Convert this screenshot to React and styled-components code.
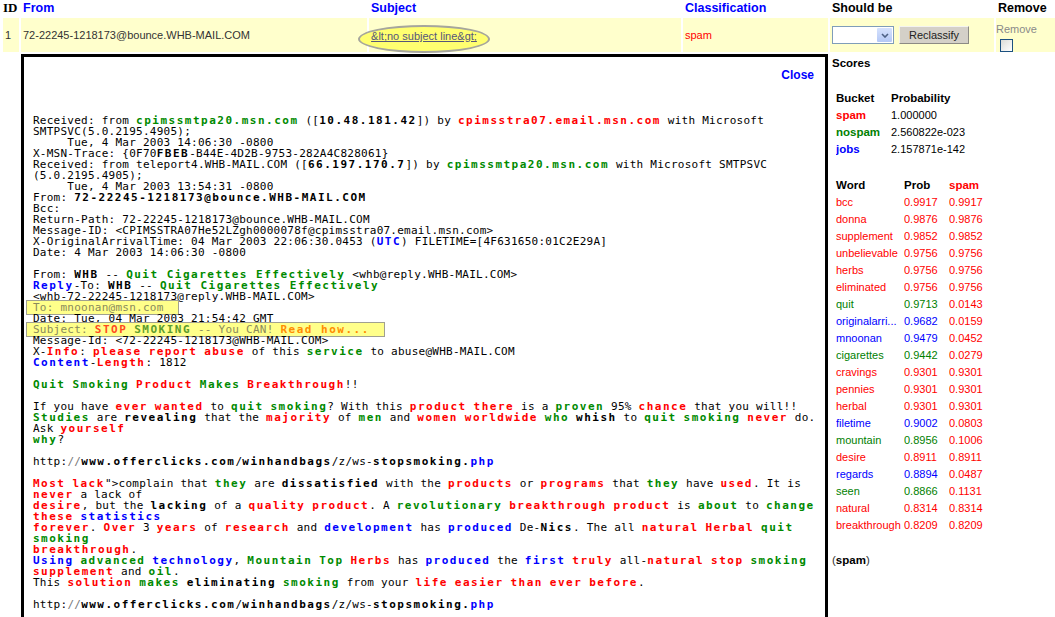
import React from "react";
import styled, { createGlobalStyle } from "styled-components";

const UI = `"Liberation Sans", Arial, sans-serif`;
const MONO = `"DejaVu Sans Mono", "Liberation Mono", monospace`;

const GlobalStyle = createGlobalStyle`
  body {
    margin: 0;
    background: #fff;
    color: #000;
    font-family: ${UI};
    font-size: 11px;
  }
`;

const tones = {
  n: { color: "#000", bold: false },
  b: { color: "#000", bold: true },
  r: { color: "#ff0000", bold: true },
  g: { color: "#008a00", bold: true },
  u: { color: "#0000ff", bold: true },
  m: { color: "#777", bold: false },
  s: { color: "#ff4a1c", bold: true },
  k: { color: "#5c9c2c", bold: true },
  o: { color: "#ff8c00", bold: true },
};

const MAIL = [
  "Received: from «g:cpimssmtpa20.msn.com» ([«b:10.48.181.42»]) by «r:cpimsstra07.email.msn.com» with Microsoft",
  "SMTPSVC(5.0.2195.4905);",
  "     Tue, 4 Mar 2003 14:06:30 -0800",
  "X-MSN-Trace: {0F70«b:FBEB»-B44E-4D2B-9753-282A4C828061}",
  "Received: from teleport4.WHB-MAIL.COM ([«b:66.197.170.7»]) by «g:cpimssmtpa20.msn.com» with Microsoft SMTPSVC",
  "(5.0.2195.4905);",
  "     Tue, 4 Mar 2003 13:54:31 -0800",
  "From: «b:72-22245-1218173@bounce.WHB-MAIL.COM»",
  "Bcc:",
  "Return-Path: 72-22245-1218173@bounce.WHB-MAIL.COM",
  "Message-ID: <CPIMSSTRA07He52LZgh0000078f@cpimsstra07.email.msn.com>",
  "X-OriginalArrivalTime: 04 Mar 2003 22:06:30.0453 («u:UTC») FILETIME=[4F631650:01C2E29A]",
  "Date: 4 Mar 2003 14:06:30 -0800",
  "",
  "From: «b:WHB» -- «g:Quit Cigarettes Effectively» <whb@reply.WHB-MAIL.COM>",
  "«u:Reply»-To: «b:WHB» -- «g:Quit Cigarettes Effectively»",
  "<whb-72-22245-1218173@reply.WHB-MAIL.COM>",
  { hl: "To: mnoonan@msn.com" },
  "Date: Tue, 04 Mar 2003 21:54:42 GMT",
  { hl: "Subject: «s:STOP» «k:SMOKING» -- You CAN! «o:Read how...»" },
  "Message-Id: <72-22245-1218173@WHB-MAIL.COM>",
  "X-«r:Info»: «r:please» «r:report» «r:abuse» of this «g:service» to abuse@WHB-MAIL.COM",
  "«u:Content»-«r:Length»: 1812",
  "",
  "«g:Quit» «g:Smoking» «r:Product» «g:Makes» «r:Breakthrough»!!",
  "",
  "If you have «r:ever» «r:wanted» to «g:quit» «g:smoking»? With this «r:product» «r:there» is a «g:proven» 95% «r:chance» that you will!!",
  "«g:Studies» are «b:revealing» that the «r:majority» of «g:men» and «r:women» «r:worldwide» «g:who» «b:whish» to «g:quit» «g:smoking» «r:never» do.",
  "Ask «r:yourself»",
  "«g:why»?",
  "",
  "http:«m://»«b:www.offerclicks.com»/«b:winhandbags»/z/ws-«b:stopsmoking.»«u:php»",
  "",
  "«r:Most» «r:lack»\">complain that «g:they» are «b:dissatisfied» with the «r:products» or «r:programs» that «g:they» have «r:used». It is",
  "«r:never» a lack of",
  "«r:desire», but the «b:lacking» of a «r:quality» «r:product». A «g:revolutionary» «r:breakthrough» «r:product» is «g:about» to «g:change»",
  "«r:these» «u:statistics»",
  "«r:forever». «r:Over» 3 «r:years» of «r:research» and «u:development» has «u:produced» De-«b:Nics». The all «r:natural» «r:Herbal» «g:quit»",
  "«g:smoking»",
  "«r:breakthrough».",
  "«u:Using» «g:advanced» «u:technology», «g:Mountain» «g:Top» «r:Herbs» has «u:produced» the «u:first» «r:truly» all-«r:natural» «r:stop» «g:smoking»",
  "«r:supplement» and «g:oil».",
  "This «r:solution» «g:makes» «b:eliminating» «g:smoking» from your «r:life» «r:easier» «r:than» «r:ever» «r:before».",
  "",
  "http:«m://»«b:www.offerclicks.com»/«b:winhandbags»/z/ws-«b:stopsmoking.»«u:php»",
  "",
  "",
];

const BUCKETS = [
  { name: "spam", color: "#ff0000", value: "1.000000" },
  { name: "nospam", color: "#008000", value: "2.560822e-023" },
  { name: "jobs", color: "#0000ff", value: "2.157871e-142" },
];

const R = "#ff0000";
const G = "#008000";
const B = "#0000ff";

const WORDS = [
  ["bcc", R, "0.9917", "0.9917"],
  ["donna", R, "0.9876", "0.9876"],
  ["supplement", R, "0.9852", "0.9852"],
  ["unbelievable", R, "0.9756", "0.9756"],
  ["herbs", R, "0.9756", "0.9756"],
  ["eliminated", R, "0.9756", "0.9756"],
  ["quit", G, "0.9713", "0.0143"],
  ["originalarri...", B, "0.9682", "0.0159"],
  ["mnoonan", B, "0.9479", "0.0452"],
  ["cigarettes", G, "0.9442", "0.0279"],
  ["cravings", R, "0.9301", "0.9301"],
  ["pennies", R, "0.9301", "0.9301"],
  ["herbal", R, "0.9301", "0.9301"],
  ["filetime", B, "0.9002", "0.0803"],
  ["mountain", G, "0.8956", "0.1006"],
  ["desire", R, "0.8911", "0.8911"],
  ["regards", B, "0.8894", "0.0487"],
  ["seen", G, "0.8866", "0.1131"],
  ["natural", R, "0.8314", "0.8314"],
  ["breakthrough", R, "0.8209", "0.8209"],
];

const parse = (line) => {
  const out = [];
  const re = /«(\w):([^»]*)»/g;
  let last = 0;
  let m;
  while ((m = re.exec(line))) {
    if (m.index > last) out.push(["n", line.slice(last, m.index)]);
    out.push([m[1], m[2]]);
    last = re.lastIndex;
  }
  if (last < line.length) out.push(["n", line.slice(last)]);
  return out;
};

const Page = styled.div`
  display: grid;
  grid-template-columns: 16px 346px 312px 145px 164px 1fr;
  grid-template-rows: 16px 34px auto;
  column-gap: 2px;
  row-gap: 2px;
  padding-left: 3px;
  width: 1055px;
  box-sizing: border-box;
  overflow: hidden;
`;

const HeadCell = styled.div`
  font-family: ${(p) => (p.$serif ? `"Liberation Serif", "Times New Roman", serif` : UI)};
  font-weight: bold;
  font-size: ${(p) => (p.$serif ? "13px" : "12.5px")};
  color: ${(p) => (p.$link ? "#0000ff" : "#000")};
  padding-left: ${(p) => (p.$serif ? "0" : "2px")};
  line-height: 16px;
  white-space: nowrap;
`;

const Cell = styled.div`
  background: #ffffcc;
  display: flex;
  flex-direction: ${(p) => (p.$stack ? "column" : "row")};
  align-items: ${(p) => (p.$stack ? "flex-start" : "center")};
  padding: ${(p) => (p.$stack ? "5px 0 0 0" : "0 0 0 2px")};
  font-family: ${UI};
  font-size: 11px;
  color: ${(p) => p.$color || "#333"};
  white-space: nowrap;
`;

const Ellipse = styled.span`
  display: inline-flex;
  align-items: center;
  justify-content: center;
  box-sizing: border-box;
  width: 132px;
  height: 28px;
  margin: 8px 0 0 -13px;
  padding-bottom: 6px;
  border: 2px solid #a6a69c;
  border-radius: 50%;
  background: #ffff70;
`;

const SubjectLink = styled.a`
  color: #56567a;
  text-decoration: underline;
  font-size: 11px;
`;

const Controls = styled.div`
  display: flex;
  align-items: center;
  gap: 5px;
`;

const SelectBox = styled.div`
  width: 62px;
  height: 18px;
  box-sizing: border-box;
  border: 1px solid #7f9db9;
  background: #fff;
  display: flex;
  justify-content: flex-end;
  padding: 1px;
`;

const SelectArrow = styled.span`
  width: 15px;
  height: 100%;
  background: linear-gradient(#d6e2fd, #b4c8f6);
  border-radius: 1px;
  display: flex;
  align-items: center;
  justify-content: center;
`;

const Button = styled.div`
  width: 70px;
  height: 18px;
  box-sizing: border-box;
  display: flex;
  align-items: center;
  justify-content: center;
  background: #d4d0c8;
  border: 1px solid;
  border-color: #f4f4f0 #8c8a84 #8c8a84 #f4f4f0;
  color: #222;
  font-size: 11px;
`;

const RemoveLabel = styled.span`
  color: #8a8a8a;
  font-size: 11px;
  line-height: 12px;
`;

const Checkbox = styled.span`
  width: 13px;
  height: 13px;
  box-sizing: border-box;
  margin: 4px 0 0 4px;
  border: 1px solid #1c5180;
  background: linear-gradient(135deg, #dcdcd7, #fff);
`;

const MailBox = styled.div`
  grid-column: 2 / 5;
  border: 3px solid #000;
  border-bottom: none;
  background: #fff;
  overflow: hidden;
  padding-bottom: 40px;
`;

const CloseRow = styled.div`
  display: flex;
  justify-content: flex-end;
  padding: 11px 11px 0 0;
  line-height: 14px;
`;

const CloseLink = styled.a`
  color: #0000ff;
  font-family: ${UI};
  font-weight: bold;
  font-size: 12px;
  text-decoration: none;
`;

const Mail = styled.div`
  margin-top: 33px;
  padding-left: 9px;
  font-family: ${MONO};
  font-size: 11px;
  letter-spacing: 0.25px;
  color: #000;
`;

const Line = styled.div`
  height: 11px;
  line-height: 11px;
  white-space: pre;
`;

const Mark = styled.span`
  color: ${(p) => tones[p.$tone].color};
  font-weight: ${(p) => (tones[p.$tone].bold ? "bold" : "normal")};
  letter-spacing: ${(p) => (tones[p.$tone].bold ? "1.5px" : "0.25px")};
`;

const Highlight = styled.span`
  margin-left: -7px;
  padding: 0 14px 0 6px;
  border: 1px solid #a0a090;
  background: #ffff8a;
  color: #8a8a5c;
`;

const HlMark = styled(Mark)`
  color: ${(p) => (p.$tone === "n" ? "#8a8a5c" : tones[p.$tone].color)};
`;

const Scores = styled.div`
  grid-column: 5 / 7;
  padding: 2px 0 0 2px;
  font-family: ${UI};
  font-size: 11px;
`;

const Title = styled.div`
  font-weight: bold;
  font-size: 11.5px;
  line-height: 14px;
  color: ${(p) => p.$color || "#000"};
`;

const ScoreTable = styled.div`
  display: grid;
  grid-template-columns: ${(p) => p.$cols};
  grid-auto-rows: 17px;
  align-items: center;
  margin-top: ${(p) => p.$top};
  padding-left: 4px;
  white-space: nowrap;
`;

const Th = styled.span`
  font-weight: bold;
  font-size: 11.5px;
  color: ${(p) => p.$color || "#000"};
`;

const Td = styled.span`
  color: ${(p) => p.$color || "#000"};
  font-weight: ${(p) => (p.$bold ? "bold" : "normal")};
  font-size: ${(p) => (p.$bold ? "11.5px" : "11px")};
  overflow: hidden;
`;

const Verdict = styled.div`
  margin-top: 19px;
  line-height: 14px;
  font-size: 11.5px;
  color: #333;
`;

const VerdictName = styled.b`
  color: #000;
`;

const renderLine = (line, i) => {
  if (typeof line === "object") {
    return (
      <Line key={i}>
        <Highlight>
          {parse(line.hl).map(([t, s], j) => (
            <HlMark key={j} $tone={t}>{s}</HlMark>
          ))}
        </Highlight>
      </Line>
    );
  }
  return (
    <Line key={i}>
      {parse(line).map(([t, s], j) => (
        <Mark key={j} $tone={t}>{s}</Mark>
      ))}
    </Line>
  );
};

export default function App() {
  return (
    <>
      <GlobalStyle />
      <Page>
        <HeadCell $serif>ID</HeadCell>
        <HeadCell $link>From</HeadCell>
        <HeadCell $link>Subject</HeadCell>
        <HeadCell $link>Classification</HeadCell>
        <HeadCell>Should be</HeadCell>
        <HeadCell>Remove</HeadCell>

        <Cell>1</Cell>
        <Cell>72-22245-1218173@bounce.WHB-MAIL.COM</Cell>
        <Cell>
          <Ellipse>
            <SubjectLink>&amp;lt;no subject line&amp;gt;</SubjectLink>
          </Ellipse>
        </Cell>
        <Cell $color="#ff0000">spam</Cell>
        <Cell>
          <Controls>
            <SelectBox>
              <SelectArrow>
                <svg width="8" height="5" viewBox="0 0 8 5">
                  <path d="M1 1 L4 4 L7 1" fill="none" stroke="#4d6185" strokeWidth="1.6" />
                </svg>
              </SelectArrow>
            </SelectBox>
            <Button>Reclassify</Button>
          </Controls>
        </Cell>
        <Cell $stack>
          <RemoveLabel>Remove</RemoveLabel>
          <Checkbox />
        </Cell>

        <MailBox>
          <CloseRow>
            <CloseLink>Close</CloseLink>
          </CloseRow>
          <Mail>{MAIL.map(renderLine)}</Mail>
        </MailBox>

        <Scores>
          <Title>Scores</Title>
          <ScoreTable $cols="55px auto" $top="19.5px">
            <Th>Bucket</Th>
            <Th>Probability</Th>
            {BUCKETS.map((b) => (
              <React.Fragment key={b.name}>
                <Td $bold $color={b.color}>{b.name}</Td>
                <Td>{b.value}</Td>
              </React.Fragment>
            ))}
          </ScoreTable>
          <ScoreTable $cols="68px 45px auto" $top="19px">
            <Th>Word</Th>
            <Th>Prob</Th>
            <Th $color="#ff0000">spam</Th>
            {WORDS.map(([w, c, p, s]) => (
              <React.Fragment key={w}>
                <Td $color={c}>{w}</Td>
                <Td $color={c}>{p}</Td>
                <Td $color="#ff0000">{s}</Td>
              </React.Fragment>
            ))}
          </ScoreTable>
          <Verdict>
            (<VerdictName>spam</VerdictName>)
          </Verdict>
        </Scores>
      </Page>
    </>
  );
}
